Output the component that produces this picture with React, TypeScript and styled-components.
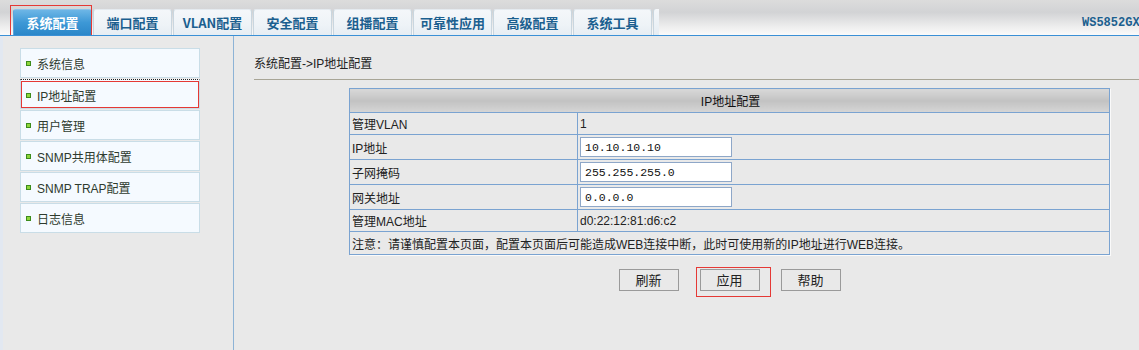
import { FC } from "react";
import styled, { createGlobalStyle } from "styled-components";

const GlobalStyle = createGlobalStyle`
  html, body {
    margin: 0;
    padding: 0;
    background: #e9e9e9;
    font-family: "Liberation Sans", "Noto Sans CJK SC", sans-serif;
    font-size: 12px;
    color: #222;
  }
`

const Header = styled.div`
  height: 35px;
  border-bottom: 1px solid #3a90d6;
  background: linear-gradient(#dcdcdc 0%, #d2d3d5 35%, #f0f0f0 80%, #fafafa 100%);
  display: flex;
  align-items: flex-end;
  padding-left: 13px;
  overflow: hidden;
  white-space: nowrap;
`

const Tab = styled.div<{ $active?: boolean }>`
  position: relative;
  flex-shrink: 0;
  width: 79px;
  height: 26px;
  margin-right: 1px;
  display: flex;
  align-items: center;
  justify-content: center;
  box-sizing: border-box;
  border-radius: 3px 3px 0 0;
  font-family: "Noto Sans CJK SC", sans-serif;
  font-weight: bold;
  font-size: 13px;
  color: ${(p) => (p.$active ? "#fff" : "#1b5f8f")};
  background: ${(p) =>
    p.$active
      ? "linear-gradient(#6db6e6 0%, #3d98d6 50%, #2b87c9 100%)"
      : "linear-gradient(#f4f7fa 0%, #eef3f7 60%, #e6edf3 100%)"};
  border-left: 1px solid ${(p) => (p.$active ? "#5aa6dc" : "#c9d6df")};
  border-right: 1px solid ${(p) => (p.$active ? "#5aa6dc" : "#c9d6df")};
  border-top: 1px solid ${(p) => (p.$active ? "#8ac4ea" : "#e4eaef")};

  ${(p) =>
    p.$active &&
    `
    &::after {
      content: "";
      position: absolute;
      left: -4px;
      top: -5px;
      right: -1px;
      bottom: -4px;
      border: 1px solid #e53935;
      pointer-events: none;
    }
  `}
`

const TabStub = styled.div`
  flex-shrink: 0;
  width: 5px;
  height: 26px;
  border-left: 1px solid #c9d6df;
  background: linear-gradient(#f4f7fa, #e6edf3);
  border-radius: 3px 0 0 0;
`

const DeviceTitle = styled.div`
  flex-shrink: 0;
  margin-left: 423px;
  align-self: center;
  margin-top: 10px;
  font-family: "Liberation Mono", monospace;
  font-weight: bold;
  font-size: 12px;
  color: #1b5f8f;
`

const Body = styled.div`
  display: flex;
  min-height: calc(100vh - 36px);
`

const Sidebar = styled.div`
  width: 213px;
  flex-shrink: 0;
  border-left: 3px solid #e2e8f1;
  border-right: 1px solid #8db3d6;
  padding: 12px 0 0 17px;
  display: flex;
  flex-direction: column;
  gap: 1px;
`

const MenuItem = styled.div<{ $active?: boolean }>`
  position: relative;
  width: 180px;
  height: 30px;
  box-sizing: border-box;
  border: 1px solid #c9dde7;
  background: #f5faff;
  display: flex;
  align-items: center;
  padding-left: 5px;
  gap: 6px;
  color: #2e3b2e;
  font-size: 12px;

  ${(p) =>
    p.$active &&
    `
    border-top: 1px dotted #222;
    padding-top: 2px;
    &::after {
      content: "";
      position: absolute;
      left: 0;
      right: 0;
      top: 1px;
      bottom: 0;
      border: 1px solid #e53935;
      pointer-events: none;
    }
  `}
`

const Bullet = styled.span`
  width: 3px;
  height: 3px;
  border: 1px solid #3c8c1c;
  background: #8fd63c;
  flex-shrink: 0;
`

const Main = styled.div`
  flex: 1;
  padding: 20px 0 0 20px;
`

const Crumb = styled.div`
  height: 23px;
  line-height: 16px;
  border-bottom: 1px solid #a8a596;
  color: #222;
`

const Table = styled.table`
  margin: 8px 0 0 95px;
  width: 761px;
  border-collapse: collapse;
  border: 1px solid #7aa3d1;
  box-shadow: 1px 1px 0 #fafafa;

  td, th {
    border: 1px solid #7aa3d1;
    padding: 0 0 0 2px;
    text-align: left;
    font-weight: normal;
    white-space: nowrap;
  }
`

const HeadCell = styled.th`
  height: 23px;
  text-align: center !important;
  background: linear-gradient(#d8d8d8 0%, #c2c2c2 50%, #d6d6d6 100%);
  color: #111;
`

const Row = styled.tr<{ $h: number }>`
  height: ${(p) => p.$h}px;
`

const LabelCell = styled.td`
  width: 225px;
`

const ValueCell = styled.td`
  color: #222;
`

const Field = styled.input`
  width: 152px;
  height: 20px;
  box-sizing: border-box;
  border: 1px solid #8ea7c8;
  background: #fff;
  padding: 0 4px;
  font-family: "Liberation Mono", monospace;
  font-size: 11.5px;
  color: #111;
  vertical-align: middle;
`

const ButtonRow = styled.div`
  display: flex;
  justify-content: center;
  gap: 21px;
  margin: 14px 0 0 95px;
  width: 761px;
`

const Btn = styled.button<{ $marked?: boolean }>`
  position: relative;
  width: 60px;
  height: 22px;
  box-sizing: border-box;
  border: 1px solid #9a9a9a;
  background: #e9e9e9;
  font-family: "Noto Sans CJK SC", sans-serif;
  font-size: 13px;
  color: #222;
  padding: 0;
  line-height: 18px;

  ${(p) =>
    p.$marked &&
    `
    &::after {
      content: "";
      position: absolute;
      left: -5px;
      top: -3px;
      right: -12px;
      bottom: -7px;
      border: 1px solid #e53935;
      pointer-events: none;
    }
  `}
`

const tabs = ["系统配置", "端口配置", "VLAN配置", "安全配置", "组播配置", "可靠性应用", "高级配置", "系统工具"]
const menu = ["系统信息", "IP地址配置", "用户管理", "SNMP共用体配置", "SNMP TRAP配置", "日志信息"]

const App: FC = () => {
    return (
        <>
            <GlobalStyle/>
            <Header>
                {tabs.map((t, i) => (
                    <Tab key={t} $active={i === 0}>{t}</Tab>
                ))}
                <TabStub/>
                <DeviceTitle>WS5852GX-4T2X</DeviceTitle>
            </Header>
            <Body>
                <Sidebar>
                    {menu.map((m, i) => (
                        <MenuItem key={m} $active={i === 1}>
                            <Bullet/>
                            {m}
                        </MenuItem>
                    ))}
                </Sidebar>
                <Main>
                    <Crumb>系统配置-&gt;IP地址配置</Crumb>
                    <Table>
                        <thead>
                        <tr>
                            <HeadCell colSpan={2}>IP地址配置</HeadCell>
                        </tr>
                        </thead>
                        <tbody>
                        <Row $h={22}>
                            <LabelCell>管理VLAN</LabelCell>
                            <ValueCell>1</ValueCell>
                        </Row>
                        <Row $h={25}>
                            <LabelCell>IP地址</LabelCell>
                            <ValueCell><Field defaultValue="10.10.10.10"/></ValueCell>
                        </Row>
                        <Row $h={25}>
                            <LabelCell>子网掩码</LabelCell>
                            <ValueCell><Field defaultValue="255.255.255.0"/></ValueCell>
                        </Row>
                        <Row $h={25}>
                            <LabelCell>网关地址</LabelCell>
                            <ValueCell><Field defaultValue="0.0.0.0"/></ValueCell>
                        </Row>
                        <Row $h={22}>
                            <LabelCell>管理MAC地址</LabelCell>
                            <ValueCell>d0:22:12:81:d6:c2</ValueCell>
                        </Row>
                        <Row $h={23}>
                            <td colSpan={2}>注意：请谨慎配置本页面，配置本页面后可能造成WEB连接中断，此时可使用新的IP地址进行WEB连接。</td>
                        </Row>
                        </tbody>
                    </Table>
                    <ButtonRow>
                        <Btn>刷新</Btn>
                        <Btn $marked>应用</Btn>
                        <Btn>帮助</Btn>
                    </ButtonRow>
                </Main>
            </Body>
        </>
    )
}

export default App
